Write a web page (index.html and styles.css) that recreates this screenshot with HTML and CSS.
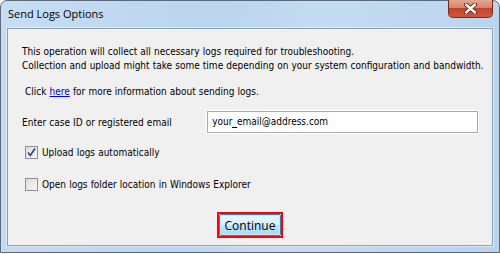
FILE: index.html
```html
<!DOCTYPE html>
<html lang="en">
  <head>
    <meta charset="UTF-8" />
    <title>Send Logs Options</title>
    <link rel="stylesheet" href="styles.css">
  </head>
  <body>
    <div class="window">
      <div class="titlebar">
        <div class="title">Send Logs Options</div>
        <div class="close-btn">
          <svg width="17" height="11" viewBox="0 0 17 11">
            <path d="M4 1.5 L13 9.5 M13 1.5 L4 9.5" stroke="#5a1e14" stroke-width="4.2" stroke-linecap="round" />
            <path d="M4 1.5 L13 9.5 M13 1.5 L4 9.5" stroke="#ffffff" stroke-width="2.4" stroke-linecap="round" />
          </svg>
        </div>
      </div>
      <div class="panel">
        <div class="intro">
          This operation will collect all necessary logs required for troubleshooting.<br />
          Collection and upload might take some time depending on your system configuration and bandwidth.
        </div>
        <div class="click-line">
          Click <a href="#" class="link">here</a> for more information about sending logs.
        </div>
        <div class="form-row">
          <div class="form-label">Enter case ID or registered email</div>
          <div class="text-input">your<span class="underscore">_</span>email@address.com</div>
        </div>
        <label class="check-row first">
          <span class="box">
            <svg width="11" height="11" viewBox="0 0 11 11">
              <path d="M2 5.5 L4.3 8.5 L9 1.5" fill="none" stroke="#2b3f8c" stroke-width="1.6" />
            </svg>
          </span>
          Upload logs automatically
        </label>
        <label class="check-row">
          <span class="box"></span>
          Open logs folder location in Windows Explorer
        </label>
        <div class="button-row">
          <div class="highlight">
            <button class="btn">Continue</button>
          </div>
        </div>
      </div>
    </div>
  </body>
</html>
```

FILE: styles.css
```css
body {
  margin: 0;
  background: #ffffff;
  font-family: "DejaVu Sans Condensed", "DejaVu Sans", sans-serif;
  font-size: 10px;
  word-spacing: 0.25px;
  color: #000000;
}

.window {
  width: 500px;
  height: 253px;
  box-sizing: border-box;
  border: 1px solid #5c6a79;
  border-radius: 7px 7px 0 0;
  background: linear-gradient(100deg, #c6def4 0%, #b9d5ef 40%, #c4dcf3 60%, #b7d3ee 100%);
  padding: 0 6px 6px 6px;
  display: flex;
  flex-direction: column;
}

.titlebar {
  height: 27px;
  display: flex;
  justify-content: space-between;
  flex-shrink: 0;
}

.title {
  font-family: "Open Sans", "Noto Sans", sans-serif;
  font-size: 11px;
  word-spacing: 0;
  padding: 5px 0 0 1px;
  color: #000000;
}

.close-btn {
  width: 45px;
  height: 18px;
  margin-top: -1px;
  box-sizing: border-box;
  border: 1px solid #7a2a1c;
  border-top: none;
  border-radius: 0 0 5px 5px;
  background: linear-gradient(#e3a796 0%, #d8826b 45%, #c2432a 50%, #cf5a3d 100%);
  display: flex;
  align-items: center;
  justify-content: center;
}

.panel {
  flex: 1;
  background: #f0f0f0;
  border: 1px solid #8f9fb0;
  box-shadow: 0 0 0 1px #dbe8f5;
  padding: 16px 14px 0 14px;
  display: flex;
  flex-direction: column;
  white-space: nowrap;
}

.intro {
  line-height: 14px;
}

.click-line {
  margin-top: 12px;
  padding-left: 3px;
  line-height: 14px;
}

.link {
  color: #0000ee;
}

.form-row {
  margin-top: 12px;
  display: flex;
  align-items: center;
}

.form-label {
  width: 186px;
}

.text-input {
  width: 272px;
  height: 22px;
  box-sizing: border-box;
  border: 1px solid #a9a9a9;
  box-shadow: 0 0 0 1px #ffffff;
  padding: 0 4px;
  line-height: 20px;
  background: #ffffff;
}

.underscore {
  border-bottom: 1px solid #000000;
}

.check-row {
  display: flex;
  align-items: center;
  gap: 4px;
  padding-left: 3px;
  height: 14px;
}

.check-row.first {
  margin-top: 12px;
}

.check-row + .check-row {
  margin-top: 18px;
}

.box {
  width: 13px;
  height: 13px;
  box-sizing: border-box;
  border: 1px solid #8e8f8f;
  background: linear-gradient(135deg, #dcdcdc, #f6f6f6);
  display: flex;
  align-items: center;
  justify-content: center;
}

.button-row {
  margin-top: auto;
  margin-bottom: 7px;
  display: flex;
  justify-content: center;
}

.highlight {
  border: 2px solid #ff0000;
}

.btn {
  display: block;
  width: 62px;
  height: 22px;
  border: 1px solid #3c7fb1;
  border-radius: 2px;
  background: linear-gradient(#eaf6fd 0%, #d9f0fc 50%, #bee6fd 50%, #a7d9f5 100%);
  box-shadow: inset 0 0 0 1px #c7ebfd;
  font-family: "Open Sans", "Noto Sans", sans-serif;
  font-size: 12px;
  word-spacing: 0;
  padding: 0;
  color: #000000;
}
```
